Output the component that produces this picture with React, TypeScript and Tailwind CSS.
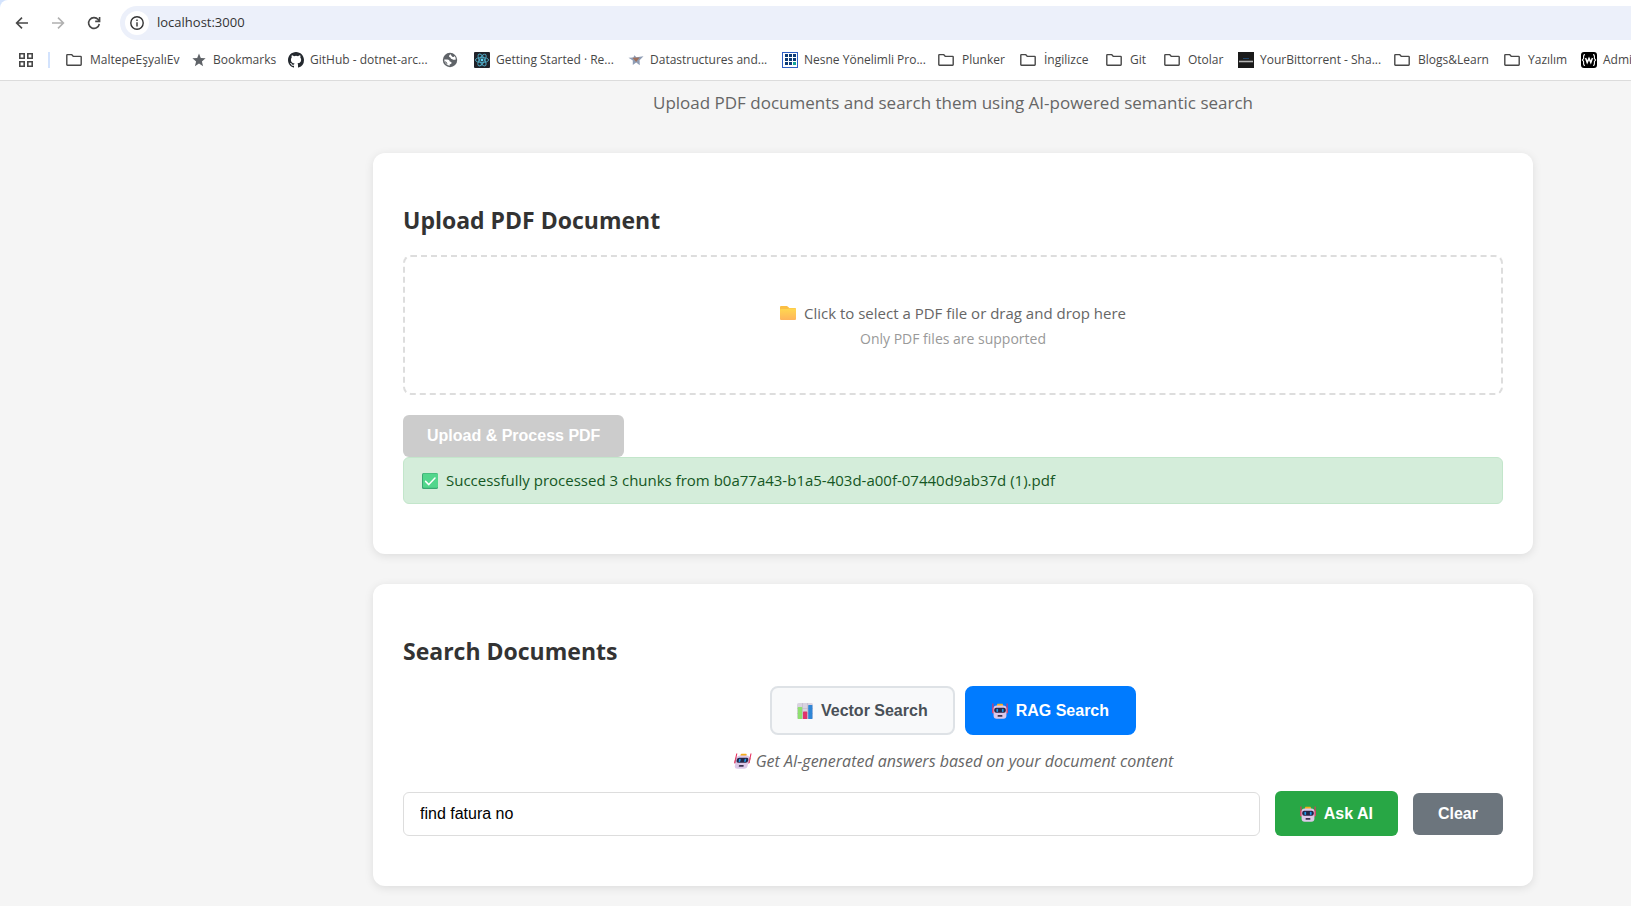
import React, { useState } from "react";

const UI_FONT = "font-['Open_Sans','Noto_Sans',sans-serif]";
const ARIAL = "font-['Liberation_Sans',Arial,sans-serif]";

function FolderIcon() {
  return (
    <svg width="16" height="16" viewBox="0 0 16 16" fill="none" stroke="#474747" strokeWidth="1.4" strokeLinejoin="round" className="mr-0.5 shrink-0">
      <path d="M0.8 12.6V3.2q0-.6.6-.6H5.6L7.4 4.4H14.6q.6 0 .6.6V12.6q0 .6-.6.6H1.4q-.6 0-.6-.6Z" />
    </svg>
  );
}

function StarIcon() {
  return (
    <svg width="16" height="16" viewBox="0 0 16 16" fill="#5f6368" className="shrink-0">
      <path d="M8 1.4 9.8 6 14.6 6.3 10.9 9.4 12.1 14.2 8 11.5 3.9 14.2 5.1 9.4 1.4 6.3 6.2 6Z" />
    </svg>
  );
}

function GithubIcon() {
  return (
    <svg width="16" height="16" viewBox="0 0 16 16" fill="#24292f" className="shrink-0">
      <path d="M8 0C3.58 0 0 3.58 0 8c0 3.54 2.29 6.53 5.47 7.59.4.07.55-.17.55-.38 0-.19-.01-.82-.01-1.49-2.01.37-2.53-.49-2.69-.94-.09-.23-.48-.94-.82-1.13-.28-.15-.68-.52-.01-.53.63-.01 1.08.58 1.23.82.72 1.21 1.87.87 2.33.66.07-.52.28-.87.51-1.07-1.78-.2-3.64-.89-3.64-3.95 0-.87.31-1.59.82-2.15-.08-.2-.36-1.02.08-2.12 0 0 .67-.21 2.2.82a7.6 7.6 0 0 1 4 0c1.53-1.04 2.2-.82 2.2-.82.44 1.1.16 1.92.08 2.12.51.56.82 1.27.82 2.15 0 3.07-1.87 3.75-3.65 3.95.29.25.54.73.54 1.48 0 1.07-.01 1.93-.01 2.2 0 .21.15.46.55.38A8 8 0 0 0 16 8c0-4.42-3.58-8-8-8Z" />
    </svg>
  );
}

function GlobeIcon() {
  return (
    <svg width="16" height="16" viewBox="0 0 16 16" className="shrink-0">
      <circle cx="8" cy="8" r="7.2" fill="#5f6368" />
      <path d="M8.8 2.2Q7 2.8 7 4.2 7 5.2 8.4 5.4 8.6 7 10.4 7.2 11.6 8.4 13.8 7.4 13.8 5.4 12.6 4 11.8 5.6 10.4 4.8 9.2 4 8.8 2.2Z" fill="#fff" />
      <path d="M2.2 7.6H5.4Q7.6 7.8 7.8 9.4 9.8 9.4 9.6 11 9.4 12.2 7.8 12.2L7.6 13.8Q2.8 13.2 2.2 7.6Z" fill="#fff" />
      <path d="M2.8 9.2Q5 9.4 5.6 12.6 3.4 11.6 2.8 9.2Z" fill="#5f6368" />
    </svg>
  );
}

function ReactIcon() {
  return (
    <svg width="16" height="16" viewBox="0 0 16 16" className="shrink-0">
      <rect width="16" height="16" rx="1" fill="#20232a" />
      <g fill="none" stroke="#4fa9c4" strokeWidth="0.9">
        <ellipse cx="8" cy="8" rx="6.6" ry="2.6" />
        <ellipse cx="8" cy="8" rx="6.6" ry="2.6" transform="rotate(60 8 8)" />
        <ellipse cx="8" cy="8" rx="6.6" ry="2.6" transform="rotate(120 8 8)" />
      </g>
      <circle cx="8" cy="8" r="1.4" fill="#61dafb" />
    </svg>
  );
}

function BirdIcon() {
  return (
    <svg width="16" height="16" viewBox="0 0 16 16" className="shrink-0">
      <path d="M0.5 5.8 5.4 5.4 6.4 3.2 8.4 5.2 15.5 4.2 11.6 8.2 11.8 13.2 8.2 10.6 4.8 13 4.8 8.4Z" fill="#8f9db5" />
      <path d="M4.4 5.8 11.6 5.6 8.2 10Z" fill="#a0705c" />
    </svg>
  );
}

function GridSquareIcon() {
  return (
    <svg width="16" height="16" viewBox="0 0 16 16" className="shrink-0">
      <rect x="0.5" y="0.5" width="15" height="15" fill="#fff" stroke="#2f5fc4" />
      <g fill="#0e3c78">
        <path d="M3 2h3v3H3zM7 2h3v3H7zM11 2h3v3h-3zM3 6h3v3H3zM7 6h3v3H7zM11 6h3v3h-3zM3 10h3v3H3zM7 10h3v3H7z" />
      </g>
      <path d="M11 10h3v3h-3z" fill="#12a39a" />
    </svg>
  );
}

function DarkBannerIcon() {
  return (
    <svg width="16" height="16" viewBox="0 0 16 16" className="shrink-0">
      <rect width="16" height="16" fill="#1a1a1a" />
      <path d="M5 6.5h6" stroke="#1f4468" />
      <path d="M1 9.5h14" stroke="#b5b5b5" strokeWidth="1.6" />
    </svg>
  );
}

function BracesIcon() {
  return (
    <svg width="16" height="16" viewBox="0 0 16 16" className="shrink-0">
      <rect width="16" height="16" rx="3" fill="#000" />
      <g fill="none" stroke="#fff" strokeWidth="1.1">
        <path d="M4 2.6Q2.6 2.6 2.6 4V6.6L1.4 8 2.6 9.4V12Q2.6 13.4 4 13.4M12 2.6Q13.4 2.6 13.4 4V6.6L14.6 8 13.4 9.4V12Q13.4 13.4 12 13.4" />
        <path d="M4.6 6 6.2 10.4 8 6.4 9.8 10.4 11.4 6" strokeWidth="1.5" />
      </g>
    </svg>
  );
}

function FolderEmoji() {
  return (
    <svg width="16" height="14" viewBox="0 0 16 14" className="shrink-0">
      <defs>
        <linearGradient id="folder" x1="0" y1="0" x2="0" y2="1">
          <stop offset="0" stopColor="#ffd84f" />
          <stop offset="1" stopColor="#ffb45c" />
        </linearGradient>
      </defs>
      <path d="M0 1Q0 0 1 0H7L9.4 2H15Q16 2 16 3V8H0Z" fill="#fbbf45" />
      <path d="M0 4Q0 3 1 3H7.4L9 2.4H15Q16 2.4 16 3.4V13Q16 14 15 14H1Q0 14 0 13Z" fill="url(#folder)" />
    </svg>
  );
}

function CheckEmoji() {
  return (
    <svg width="16" height="16" viewBox="0 0 16 16" className="shrink-0">
      <rect width="16" height="16" rx="1.6" fill="#3aa873" />
      <rect x="1" y="0.4" width="15" height="14.4" rx="1.2" fill="#52d68c" />
      <path d="M3.6 8.4 6.8 11.6 13 5" fill="none" stroke="#fff" strokeWidth="1.5" strokeLinecap="round" strokeLinejoin="round" />
    </svg>
  );
}

function ChartEmoji() {
  return (
    <svg width="16" height="16" viewBox="0 0 16 16" className="shrink-0">
      <rect width="16" height="16" rx="1.6" fill="#d9d3e0" />
      <path d="M0 5.5H16M0 10.5H16M5.5 0V16M10.5 0V16" stroke="#bdb5c8" strokeWidth="0.6" />
      <rect x="0.8" y="4" width="4.4" height="12" rx="0.6" fill="#8fe070" />
      <rect x="6" y="8.6" width="4.2" height="7.4" rx="0.6" fill="#e0346c" />
      <rect x="11.2" y="2" width="4.2" height="14" rx="0.6" fill="#2f86d6" />
    </svg>
  );
}

function RobotEmoji({ slanted = false }: { slanted?: boolean }) {
  return (
    <svg width={slanted ? 19 : 16} height="16" viewBox={slanted ? "0 0 19 16" : "0 0 16 16"} className="shrink-0">
      <g transform={slanted ? "translate(3 0) skewX(-12)" : undefined}>
        <path d="M0.9 0.4V10M15.1 0.4V10" stroke="#e8315f" strokeWidth="1.1" />
        <rect x="0.3" y="4.6" width="2" height="6" rx="0.8" fill="#d9496f" />
        <rect x="13.7" y="4.6" width="2" height="6" rx="0.8" fill="#d9496f" />
        <rect x="5" y="0.8" width="6" height="3" rx="0.8" fill="#f5ad1f" />
        <rect x="1.6" y="2.6" width="12.8" height="13.2" rx="3" fill="#dcc8e8" />
        <rect x="2.2" y="4.8" width="11.6" height="5" rx="2" fill="#242547" />
        <rect x="4.4" y="5.8" width="1.7" height="3.2" rx="0.8" fill="#1f9be8" />
        <rect x="9.9" y="5.8" width="1.7" height="3.2" rx="0.8" fill="#1f9be8" />
        <rect x="5.6" y="12" width="4.8" height="1.8" rx="0.6" fill="#3d3350" />
      </g>
    </svg>
  );
}

const bookmarks: { label: string; icon: React.ReactNode; width: string }[] = [
  { label: "MaltepeEşyalıEv", icon: <FolderIcon />, width: "w-[125px]" },
  { label: "Bookmarks", icon: <StarIcon />, width: "w-[97px]" },
  { label: "GitHub - dotnet-arc...", icon: <GithubIcon />, width: "w-[154px]" },
  { label: "", icon: <GlobeIcon />, width: "w-8" },
  { label: "Getting Started · Re...", icon: <ReactIcon />, width: "w-[154px]" },
  { label: "Datastructures and...", icon: <BirdIcon />, width: "w-[154px]" },
  { label: "Nesne Yönelimli Pro...", icon: <GridSquareIcon />, width: "w-[156px]" },
  { label: "Plunker", icon: <FolderIcon />, width: "w-[82px]" },
  { label: "İngilizce", icon: <FolderIcon />, width: "w-[86px]" },
  { label: "Git", icon: <FolderIcon />, width: "w-[58px]" },
  { label: "Otolar", icon: <FolderIcon />, width: "w-[74px]" },
  { label: "YourBittorrent - Sha...", icon: <DarkBannerIcon />, width: "w-[156px]" },
  { label: "Blogs&Learn", icon: <FolderIcon />, width: "w-[110px]" },
  { label: "Yazılım", icon: <FolderIcon />, width: "w-[77px]" },
  { label: "Admi", icon: <BracesIcon />, width: "w-auto" },
];

function BrowserBar() {
  return (
    <header className={`${UI_FONT} border-b border-[#dcdcdc] bg-[#d3e3fd]`}>
      <div className="flex items-center rounded-tl-lg bg-white pt-1.5 pl-3.5">
        <button aria-label="Back" className="flex size-4 items-center justify-center">
          <svg width="16" height="16" viewBox="0 0 16 16" fill="none" stroke="#474747" strokeWidth="1.6">
            <path d="M14 8H3M8 2.6 2.6 8 8 13.4" />
          </svg>
        </button>
        <button aria-label="Forward" disabled className="ml-5 flex size-4 items-center justify-center">
          <svg width="16" height="16" viewBox="0 0 16 16" fill="none" stroke="#b0b0b0" strokeWidth="1.6">
            <path d="M2 8H13M8 2.6 13.4 8 8 13.4" />
          </svg>
        </button>
        <button aria-label="Reload" className="ml-5 flex size-4 items-center justify-center">
          <svg width="16" height="16" viewBox="0 0 16 16" fill="none" stroke="#474747" strokeWidth="1.6">
            <path d="M13.3 9A5.4 5.4 0 1 1 12.2 4.6L13.6 6.2M13.6 2V6.4H9.2" />
          </svg>
        </button>
        <div className="ml-[18px] flex h-[34px] flex-1 items-center rounded-l-full bg-[#ecf0fa] pl-[5px]">
          <span className="flex size-6 items-center justify-center rounded-full bg-white">
            <svg width="14" height="14" viewBox="0 0 14 14" fill="none" stroke="#333" strokeWidth="1.4">
              <circle cx="7" cy="7" r="6.2" />
              <path d="M7 6.2V10.4M7 3.6V5" />
            </svg>
          </span>
          <input
            aria-label="Address"
            defaultValue="localhost:3000"
            className="ml-2 min-w-0 flex-1 bg-transparent text-[13px] text-[#333] outline-none"
          />
        </div>
      </div>
      <nav className="flex h-10 items-center overflow-hidden bg-white pl-[18px] text-[12px] text-[#474747]">
        <button aria-label="All apps" className="shrink-0">
          <svg width="16" height="16" viewBox="0 0 16 16" fill="none" stroke="#474747" strokeWidth="1.6">
            <path d="M1.8 1.8h4.4v4.4H1.8zM9.8 1.8h4.4v4.4H9.8zM1.8 9.8h4.4v4.4H1.8zM9.8 9.8h4.4v4.4H9.8z" />
          </svg>
        </button>
        <span className="ml-3.5 h-4 w-0.5 shrink-0 bg-[#d3e3fd]" />
        <ul className="ml-4 flex items-center">
          {bookmarks.map((b) => (
            <li key={b.label} className={`${b.width} shrink-0`}>
              <a href="#" aria-label={b.label || "Web page"} className="flex items-center gap-1.5 whitespace-nowrap">
                {b.icon}
                {b.label && <span>{b.label}</span>}
              </a>
            </li>
          ))}
        </ul>
      </nav>
    </header>
  );
}

function Card({ title, children }: { title: string; children: React.ReactNode }) {
  return (
    <section className="mb-[30px] rounded-xl bg-white px-[30px] py-[50px] shadow-[0_2px_10px_rgba(0,0,0,0.1)]">
      <h2 className="mb-[18px] text-[23px] leading-[34px] font-bold text-[#333]">{title}</h2>
      {children}
    </section>
  );
}

export default function App() {
  const [query, setQuery] = useState("find fatura no");

  return (
    <div className="flex h-screen flex-col overflow-hidden bg-[#f5f5f5]">
      <BrowserBar />
      <main className={`${UI_FONT} flex-1 overflow-hidden pr-[98px] pl-[373px] text-[15px]`}>
        <p className="mt-2.5 mb-[38px] text-center text-[17px] leading-6 text-[#666]">
          Upload PDF documents and search them using AI-powered semantic search
        </p>

        <Card title="Upload PDF Document">
          <label className="flex h-[140px] cursor-pointer flex-col items-center justify-center rounded-lg border-2 border-dashed border-[#ddd] text-[#666]">
            <input type="file" accept=".pdf" className="sr-only" />
            <span className="flex items-center gap-2 leading-6">
              <FolderEmoji />
              Click to select a PDF file or drag and drop here
            </span>
            <small className="mt-1 text-[14px] leading-5 text-[#999]">Only PDF files are supported</small>
          </label>
          <button disabled className={`${ARIAL} mt-5 block h-[42px] rounded-md bg-[#ccc] px-6 text-[16px] font-bold text-white`}>
            Upload &amp; Process PDF
          </button>
          <div className="flex h-[47px] items-center gap-2 rounded-md border border-[#c3e6cb] bg-[#d4edda] px-[18px] text-[#155724]">
            <CheckEmoji />
            Successfully processed 3 chunks from b0a77a43-b1a5-403d-a00f-07440d9ab37d (1).pdf
          </div>
        </Card>

        <Card title="Search Documents">
          <div className={`${ARIAL} flex justify-center gap-2.5 text-[16px] font-bold`}>
            <button className="flex h-[49px] items-center gap-2 rounded-lg border-2 border-[#dee2e6] bg-[#f8f9fa] px-[25px] text-[#495057]">
              <ChartEmoji />
              Vector Search
            </button>
            <button className="flex h-[49px] items-center gap-2 rounded-lg border-2 border-[#007bff] bg-[#007bff] px-[25px] text-white">
              <RobotEmoji />
              RAG Search
            </button>
          </div>
          <p className="mt-3.5 mb-[18px] flex items-center justify-center gap-1 text-[16px] leading-6 text-[#666] italic">
            <RobotEmoji slanted />
            Get AI-generated answers based on your document content
          </p>
          <form className={`${ARIAL} flex items-center gap-[15px] text-[16px]`} onSubmit={(e) => e.preventDefault()}>
            <input
              aria-label="Search query"
              value={query}
              onChange={(e) => setQuery(e.target.value)}
              className="h-11 min-w-0 flex-1 rounded-md border border-[#ddd] bg-white px-4 text-black outline-none"
            />
            <button type="submit" className="flex h-[45px] items-center gap-2 rounded-md bg-[#28a745] px-[25px] font-bold text-white">
              <RobotEmoji />
              Ask AI
            </button>
            <button type="button" onClick={() => setQuery("")} className="h-[42px] rounded-md bg-[#6c757d] px-[25px] font-bold text-white">
              Clear
            </button>
          </form>
        </Card>
      </main>
    </div>
  );
}
